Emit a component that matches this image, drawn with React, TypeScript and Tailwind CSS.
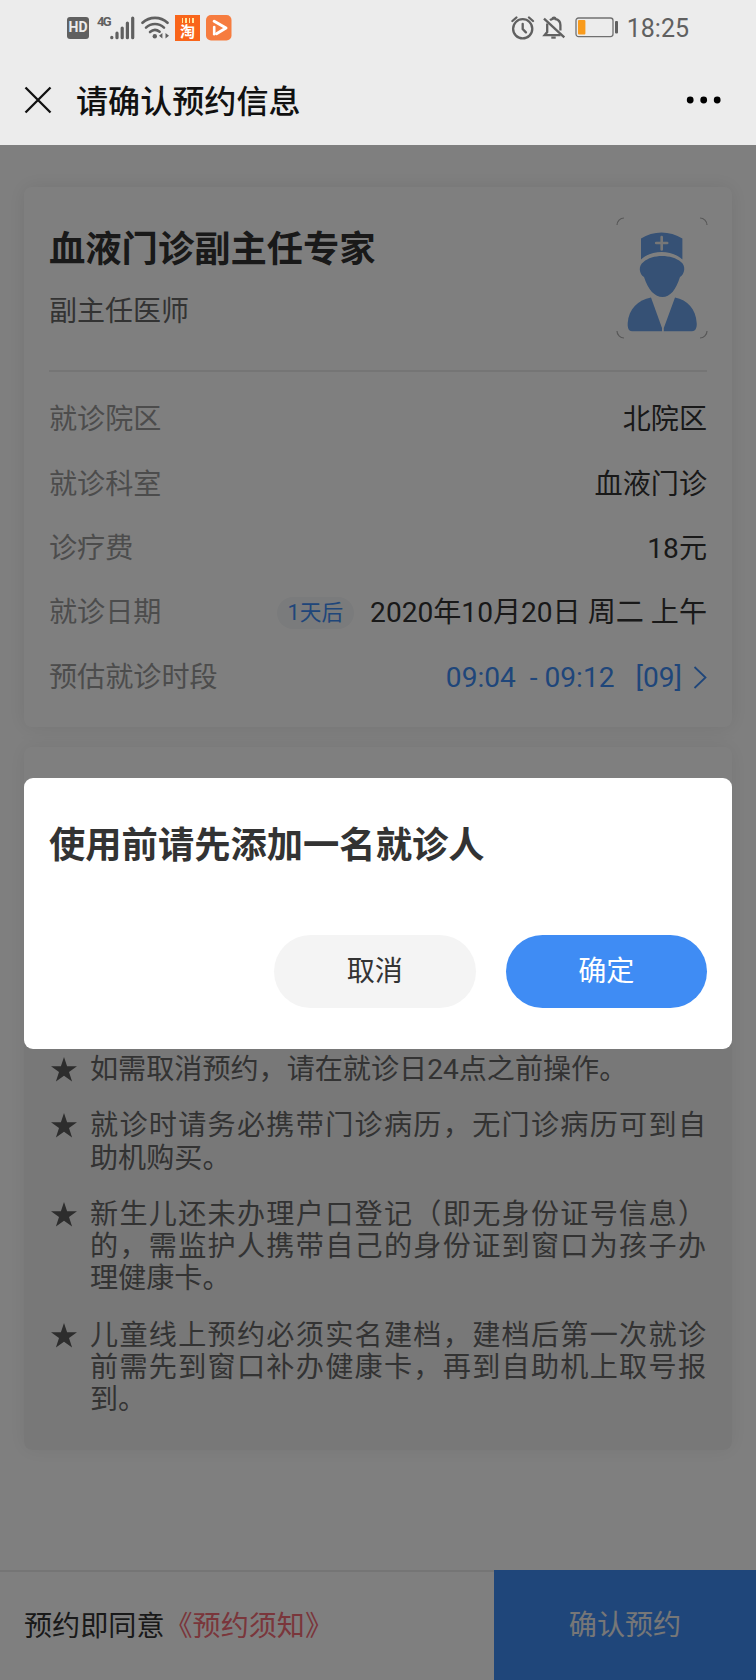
import type { ReactNode } from 'react';

interface InfoRowProps {
  label: string;
  children: ReactNode;
}

const NOTES: string[] = [
  '如需取消预约，请在就诊日24点之前操作。',
  '就诊时请务必携带门诊病历，无门诊病历可到自助机购买。',
  '新生儿还未办理户口登记（即无身份证号信息）的，需监护人携带自己的身份证到窗口为孩子办理健康卡。',
  '儿童线上预约必须实名建档，建档后第一次就诊前需先到窗口补办健康卡，再到自助机上取号报到。',
];

function SignalIcon() {
  return (
    <svg width="25" height="24" viewBox="0 0 25 24" fill="none" stroke="#606060" strokeWidth="3.2" strokeLinecap="round">
      <path d="M1.8 21.3v.4M7 17.2v4.5M12.2 12v9.7M17.4 7v14.7M22.7 2v19.7" />
    </svg>
  );
}

function WifiIcon() {
  return (
    <svg width="28" height="24" viewBox="0 0 28 24" fill="none" stroke="#606060" strokeWidth="2.6" strokeLinecap="round">
      <path d="M1.5 6.8C8.5.2 19.5.2 26.5 6.8" />
      <path d="M5 11.6c5.2-4.8 12.8-4.8 18 0" />
      <path d="M9 16c3-2.6 6.6-2.7 9.6-.3" />
      <circle cx="13.8" cy="20.2" r="2.2" fill="#606060" stroke="none" />
      <path d="M18 19.800l3.400-2.800v5.600zM28 19.800l-3.500-2.800v5.600z" fill="#606060" stroke="none" />
    </svg>
  );
}

function PlayIcon() {
  return (
    <svg width="26" height="26" viewBox="0 0 26 26" fill="none">
      <rect width="25.5" height="25.5" rx="5" fill="#f67c3f" />
      <path d="M8.2 6.2L20 13 10.5 18.7" stroke="#fff" strokeWidth="3" strokeLinecap="round" strokeLinejoin="round" />
      <path d="M8.2 12v7.2" stroke="#fff" strokeWidth="2.6" strokeLinecap="round" />
    </svg>
  );
}

function AlarmIcon() {
  return (
    <svg width="24" height="24" viewBox="0 0 24 24" fill="none" stroke="#606060" strokeWidth="2.3" strokeLinecap="round">
      <circle cx="11.7" cy="12.8" r="9.6" />
      <path d="M11.7 7.8v5.2l3.2 3.4M1.4 5L5.4 1.5M22 5L18 1.5" />
    </svg>
  );
}

function BellOffIcon() {
  return (
    <svg width="24" height="24" viewBox="0 0 24 24" fill="none" stroke="#606060" strokeWidth="2.3">
      <path d="M2 2.6L22.3 21.4" />
      <path d="M5.2 7.4v8.6l-2.6 3.2h16" />
      <path d="M8 4.2c1-.8 1.8-1 2.6-1.2 0-1.8 2.8-1.8 2.8 0 3.4.7 5 3 5 6v5.6" />
      <path d="M9.3 21.6h4.4" strokeWidth="2.2" />
    </svg>
  );
}

function BatteryIcon() {
  return (
    <svg width="44" height="21" viewBox="0 0 44 21" fill="none">
      <rect x="1" y="1" width="37" height="18.6" rx="2.5" stroke="#707070" strokeWidth="1.3" />
      <rect x="3" y="3" width="7.4" height="14.6" rx="1" fill="#f99b1c" />
      <rect x="40" y="4" width="3" height="12.6" rx="1" fill="#606060" />
    </svg>
  );
}

function DoctorAvatar() {
  return (
    <svg className="-mt-px -mr-px" width="92" height="122" viewBox="0 0 92 122" fill="none">
      <path
        d="M1 8a7 7 0 0 1 7-7M84 1a7 7 0 0 1 7 7M91 114a7 7 0 0 1-7 7M8 121a7 7 0 0 1-7-7"
        stroke="#b0b0b0"
        strokeWidth="1.2"
      />
      <g fill="#6ca3ea">
        <path d="M25 21.500C37 13.500 54 13.500 66.400 21.500V42.400C55 32.500 36 32.500 25 42.400Z" />
        <path d="M27.500 45C36 37 56 37 65 45C70 48.500 69 57 64 60C60 73 54 80 46.500 80S32 73 28 60C23 57 22 48.500 27.500 45Z" />
        <path d="M35 80.500L46 111V114.200H16C12 114.200 11.500 110 11.700 106C12.500 92 22 83 35 80.500Z" />
        <path d="M59 80.500L47.800 111V114.200H76C80 114.200 81 110 80.700 106C80 92 71.500 83 59 80.500Z" />
      </g>
      <path d="M45.700 20v12.500M40.200 26h11" stroke="#eee" strokeWidth="2.6" strokeLinecap="round" />
    </svg>
  );
}

function InfoRow({ label, children }: InfoRowProps) {
  return (
    <li className="flex h-[64.4px] items-center justify-between">
      <span className="text-[#999]">{label}</span>
      {children}
    </li>
  );
}

function StatusBar() {
  return (
    <div className="flex h-[55px] items-center justify-between pr-[67px] pl-[67px] text-[#606060]">
      <div className="flex items-center">
        <span className="flex h-[22px] w-[22px] items-center justify-center rounded-[3px] bg-[#606060] font-[Roboto] text-[14px] font-bold text-[#ececec]">
          HD
        </span>
        <span className="-mt-[13px] ml-[8px] w-[13px] font-[Roboto] text-[13px] leading-none font-bold tracking-[-1.8px]">
          4G
        </span>
        <SignalIcon />
        <span className="ml-[6px] flex">
          <WifiIcon />
        </span>
        <span className="ml-[6px] flex h-[26px] w-[25px] flex-col items-center bg-[#f9651a] text-white">
          <span className="mt-[3px] flex gap-[2px]">
            <i className="h-[5px] w-[1.5px] bg-[#ffe9a0]" />
            <i className="h-[5px] w-[1.5px] bg-[#ffe9a0]" />
            <i className="h-[5px] w-[1.5px] bg-[#ffe9a0]" />
            <i className="h-[5px] w-[1.5px] bg-[#ffe9a0]" />
          </span>
          <span className="mt-[2px] text-[15px] leading-[15px] font-bold">淘</span>
        </span>
        <span className="ml-[6px] flex">
          <PlayIcon />
        </span>
      </div>
      <div className="flex items-center">
        <AlarmIcon />
        <span className="ml-[7px] flex">
          <BellOffIcon />
        </span>
        <span className="ml-[9px] flex">
          <BatteryIcon />
        </span>
        <span className="mt-[2px] ml-[8px] font-[Roboto] text-[25px] leading-none">18:25</span>
      </div>
    </div>
  );
}

function NavBar() {
  return (
    <div className="flex h-[90px] items-center pr-[34px] pl-[24px] text-[#111]">
      <svg width="28" height="28" viewBox="0 0 28 28" fill="none" stroke="currentColor" strokeWidth="2.3">
        <path d="M1.500 1.500L26.500 26.500M26.500 1.500L1.500 26.500" />
      </svg>
      <h1 className="mt-[4px] ml-[24px] flex-1 text-[32.100px] leading-none font-medium">请确认预约信息</h1>
      <svg width="36" height="8" viewBox="0 0 36 8" fill="#000">
        <circle cx="4.200" cy="4" r="3.400" />
        <circle cx="17.700" cy="4" r="3.400" />
        <circle cx="31.200" cy="4" r="3.400" />
      </svg>
    </div>
  );
}

function AppointmentCard() {
  return (
    <section className="h-[540px] rounded-[8px] bg-white px-[25px] shadow-[0_0_20px_rgba(0,0,0,0.09)]">
      <header className="flex h-[185px] justify-between border-b-2 border-[#ebebeb] pt-[31px]">
        <div>
          <h2 className="mt-[10px] text-[36.300px] leading-[44px] font-bold text-[#333]">血液门诊副主任专家</h2>
          <p className="mt-[20px] text-[28px] leading-[40px] text-[#666]">副主任医师</p>
        </div>
        <DoctorAvatar />
      </header>
      <ul className="pt-[16px] text-[#333]">
        <InfoRow label="就诊院区">北院区</InfoRow>
        <InfoRow label="就诊科室">血液门诊</InfoRow>
        <InfoRow label="诊疗费">18元</InfoRow>
        <InfoRow label="就诊日期">
          <span className="flex items-center">
            <span className="mr-[16px] flex h-[32px] items-center rounded-full bg-[#f5f6f8] px-[11px] text-[21.700px] text-[#3f8cf4]">
              1天后
            </span>
            2020年10月20日 周二 上午
          </span>
        </InfoRow>
        <InfoRow label="预估就诊时段">
          <span className="flex items-center text-[#3f8cf4]">
            <span>09:04</span>
            <span className="ml-[14px]">- 09:12</span>
            <span className="ml-[21px]">[09]</span>
            <svg className="ml-[11px]" width="14" height="24" viewBox="0 0 14 24" fill="none" stroke="currentColor" strokeWidth="1.8">
              <path d="M1.500 1L12.500 11.500L1.500 22" />
            </svg>
          </span>
        </InfoRow>
      </ul>
    </section>
  );
}

function NotesCard() {
  return (
    <section className="mt-[20px] h-[703px] overflow-hidden rounded-[8px] bg-white shadow-[0_0_20px_rgba(0,0,0,0.07)]">
      <ul className="mt-[120px] flex h-[583px] flex-col gap-[24px] bg-[#f1f1f1] px-[26px] pt-[187px] leading-[32.250px] text-[#666]">
        {NOTES.map((note) => (
          <li key={note} className="flex">
            <svg className="mt-[3px] mr-[13px] ml-px shrink-0" width="26" height="25" viewBox="0 0 26 25" fill="#5a5a5a">
              <path d="M13 0l3.100 9.300H26l-8 5.800 3.100 9.400L13 18.700l-8.100 5.800L8 15.100 0 9.300h9.900z" />
            </svg>
            <p className="w-[616px] text-justify">{note}</p>
          </li>
        ))}
      </ul>
    </section>
  );
}

function BottomBar() {
  return (
    <footer className="flex h-[110px]">
      <p className="flex flex-1 items-center border-t-2 border-[#ebebeb] pt-[3px] pl-[24px] text-[#333]">
        预约即同意
        <span className="text-[#f56c76]">《预约须知》</span>
      </p>
      <button className="w-[262px] bg-[#3f8cf4] pt-[2px] text-[#eee]">确认预约</button>
    </footer>
  );
}

function ConfirmDialog() {
  return (
    <div className="flex h-[270.500px] w-[708px] flex-col rounded-[9px] bg-white px-[25px] text-[#333]">
      <h3 className="mt-[46px] text-[36.300px] leading-[44px] font-bold">使用前请先添加一名就诊人</h3>
      <div className="mt-[67px] flex justify-end gap-[30px]">
        <button className="h-[73px] w-[201.500px] rounded-full bg-[#f4f4f4] pt-[2px]">取消</button>
        <button className="h-[73px] w-[201.500px] rounded-full bg-[#3f8cf4] pt-[2px] text-white">确定</button>
      </div>
    </div>
  );
}

export default function App() {
  return (
    <div className="flex h-[1680px] w-[756px] flex-col overflow-hidden bg-white font-[Roboto,'Noto_Sans_CJK_SC',sans-serif] text-[28.100px]">
      <div className="h-[145px] bg-[#ececec]">
        <StatusBar />
        <NavBar />
      </div>
      <div className="relative flex flex-1 flex-col">
        <main className="flex-1 px-[24px] pt-[42px]">
          <AppointmentCard />
          <NotesCard />
        </main>
        <BottomBar />
        <div className="absolute inset-0 flex justify-center bg-black/50 pt-[633px]">
          <ConfirmDialog />
        </div>
      </div>
    </div>
  );
}
